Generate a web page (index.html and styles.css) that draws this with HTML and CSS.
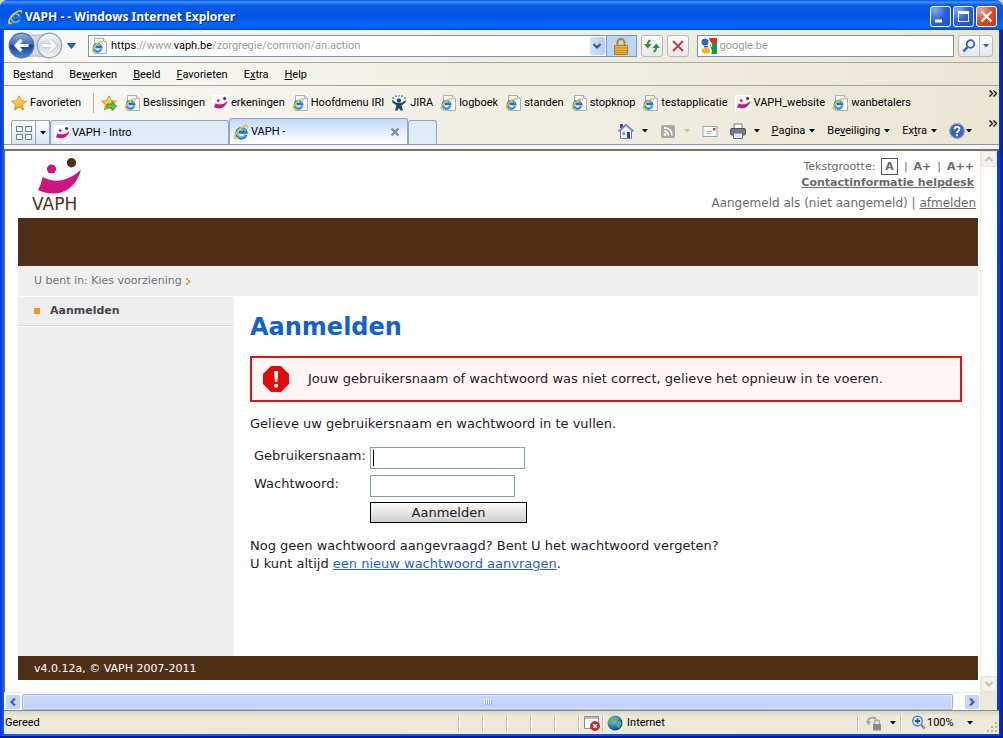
FILE: index.html
```html
<!DOCTYPE html>
<html lang="nl">
<head>
<meta charset="utf-8">
<title>VAPH - - Windows Internet Explorer</title>
<link rel="stylesheet" href="styles.css">
</head>
<body>
<svg class="defs" aria-hidden="true">
  <defs>
    <linearGradient id="blueBtn" x1="0" y1="0" x2="0" y2="1"><stop offset="0" stop-color="#8fb4e6"/><stop offset=".45" stop-color="#3c6fc0"/><stop offset=".5" stop-color="#0f3f96"/><stop offset="1" stop-color="#3f8ce0"/></linearGradient>
    <linearGradient id="greyBtn" x1="0" y1="0" x2="0" y2="1"><stop offset="0" stop-color="#fafbfd"/><stop offset=".5" stop-color="#d3d9e2"/><stop offset="1" stop-color="#f4f6fa"/></linearGradient>
    <linearGradient id="gold" x1="0" y1="0" x2="0" y2="1"><stop offset="0" stop-color="#ffe98a"/><stop offset="1" stop-color="#f0a010"/></linearGradient>
    <radialGradient id="globeFill" cx=".35" cy=".3" r=".8"><stop offset="0" stop-color="#a8dcff"/><stop offset=".5" stop-color="#2f7fd0"/><stop offset="1" stop-color="#0c3c88"/></radialGradient>
    <symbol id="e" viewBox="0 0 16 16">
      <path d="M13 10.600A4.800 4.800 0 1 1 13.100 8.300H5.800" fill="none" stroke="#1d74cc" stroke-width="3"/>
      <path d="M12.600 10.800A4.500 4.500 0 0 1 4.200 8.300A4.600 4.600 0 0 1 12.700 7.400" fill="none" stroke="#6cc4fa" stroke-width="1.300"/>
      <path d="M1.500 14.800C-.6 12 5 4.200 10 2 13.800.2 16 1 14.600 4.600 14.400 2 11.600 2.400 8.800 4.600 4.400 8.200 1.800 12.200 3 13.500 4 14.500 6 13.400 7 12.800 5 15 2.400 16 1.500 14.800z" fill="#f6cf38" stroke="#b8942a" stroke-width=".3"/>
    </symbol>
    <symbol id="page" viewBox="0 0 16 16">
      <path d="M3.500 .5H12.500L15.500 3.500V15.500H3.500z" fill="#fff" stroke="#a9b0bc"/><path d="M12.500.5V3.500H15.500" fill="#e8ecf2" stroke="#a9b0bc"/>
      <svg x="0" y="2.500" width="12.500" height="12.500" viewBox="0 0 16 16"><use href="#e"/></svg>
    </symbol>
    <symbol id="smile" viewBox="0 0 50 37">
      <circle cx="19.500" cy="11" r="4.600" fill="#cf1480"/><circle cx="39.500" cy="4.700" r="4.700" fill="#4f3017"/>
      <path d="M10.500 19Q23 25.500 35 20.500Q43 17.500 49 11.500Q46 24 36.500 31Q23 39.500 6 32Q9.500 26 10.500 19z" fill="#cf1480"/>
    </symbol>
    <symbol id="star" viewBox="0 0 16 16"><path d="M8 .8 10.200 5.600 15.400 6.200 11.500 9.700 12.600 15 8 12.300 3.400 15 4.500 9.700.6 6.200 5.800 5.600z" fill="url(#gold)" stroke="#d08c1c" stroke-width=".9"/></symbol>
    <symbol id="down" viewBox="0 0 6 4"><path d="M0 0H6L3 3.500z" fill="currentColor"/></symbol>
    <symbol id="more" viewBox="0 0 8 7"><path d="M.5.500 3.500 3.500.5 6.500M4.500.500 7.500 3.500 4.500 6.500" fill="none" stroke="#000" stroke-width="1.300"/></symbol>
    <symbol id="chev" viewBox="0 0 10 10"><path d="M1.500 3 5 6.500 8.500 3" fill="none" stroke="currentColor" stroke-width="2.200"/></symbol>
  </defs>
</svg>
<div class="window">
  <header class="titlebar">
    <svg class="i16"><use href="#e"/></svg>
    <span class="title">VAPH - - Windows Internet Explorer</span>
    <button class="winbtn" aria-label="Minimaliseren"><svg viewBox="0 0 19 19"><path d="M4 12.500H11V15.500H4z" fill="#fff"/></svg></button>
    <button class="winbtn" aria-label="Maximaliseren"><svg viewBox="0 0 19 19"><path d="M4.500 5V14.500H14.500V5" fill="none" stroke="#fff"/><path d="M4 4H15V7H4z" fill="#fff"/></svg></button>
    <button class="winbtn close" aria-label="Sluiten"><svg viewBox="0 0 19 19"><path d="M4.500 4.500 14.500 14.500M14.500 4.500 4.500 14.500" stroke="#fff" stroke-width="2.300"/></svg></button>
  </header>
  <div class="chrome">
    <div class="address-row">
      <svg class="nav" viewBox="0 0 55 28" role="img" aria-label="Terug en vooruit">
        <path d="M13 1.500Q27 5 41 1.500V26Q27 22 13 26z" fill="#d5d8de" stroke="#b0b4bc"/>
        <circle cx="13.500" cy="13.500" r="12.200" fill="url(#blueBtn)" stroke="#5c7099" stroke-width="1.400"/>
        <path d="M13.500 8 8 13.500 13.500 19M9 13.500H20.500" fill="none" stroke="#fff" stroke-width="3.200"/>
        <circle cx="41.500" cy="13.500" r="12.200" fill="url(#greyBtn)" stroke="#a0a7b4" stroke-width="1.400"/>
        <path d="M41.500 8 47 13.500 41.500 19M46 13.500H34.500" fill="none" stroke="#b4bac6" stroke-width="4.200"/><path d="M41.500 8 47 13.500 41.500 19M46 13.500H34.500" fill="none" stroke="#fff" stroke-width="2.800"/>
      </svg>
      <svg class="history" viewBox="0 0 9 6"><path d="M.5.500H8.500L4.500 5.500z" fill="#2b74b8" stroke="#123e74" stroke-width=".8"/></svg>
      <div class="address">
        <svg class="i16"><use href="#page"/></svg>
        <span class="url"><b>https</b>://www.<b>vaph.be</b>/zorgregie/common/an.action</span>
        <button class="drop" aria-label="Adressen"><svg viewBox="0 0 10 10"><use href="#chev"/></svg></button>
        <button class="lock" aria-label="Beveiligingsrapport"><svg viewBox="0 0 14 17"><path d="M3.500 8V4.500A3.500 3.500 0 0 1 10.500 4.500V8" fill="none" stroke="#b08424" stroke-width="2"/><path d="M.5 7.500H13.500V16.500H.5z" fill="#eebb38" stroke="#b07c10"/><path d="M1 10H13M1 12.500H13M1 14.500H13" stroke="#c28a18"/></svg></button>
      </div>
      <button class="tool" aria-label="Vernieuwen"><svg viewBox="0 0 16 14"><path d="M6.500 1.500Q3.800 2 3.800 6M9.500 12.500Q12.200 12 12.200 8" fill="none" stroke="#2d9330" stroke-width="2"/><path d="M0 5H7.600L3.800 9.500zM8.400 9H16L12.200 4.500z" fill="#2d9330"/></svg></button>
      <button class="tool" aria-label="Stoppen"><svg viewBox="0 0 16 14"><path d="M3 2 13 12M13 2 3 12" stroke="#c4413c" stroke-width="2"/></svg></button>
      <label class="search">
        <svg viewBox="0 0 16 16"><path d="M0 0H16V16H0z" fill="#fff"/><path d="M8 0H16V5H9z" fill="#e02c20"/><path d="M9 5H16V16H10Q12 12 9 9z" fill="#159a45"/><circle cx="4" cy="4" r="3.500" fill="#2c64c8"/><ellipse cx="5" cy="12.700" rx="4.200" ry="3" fill="#f5b31c"/><path d="M3 8H7V9.500H3z" fill="#2c64c8"/><path d="M8 3Q12 7 9.500 9" stroke="#fff" stroke-width="1.500" fill="none"/></svg>
        <input type="text" placeholder="google.be" aria-label="Zoeken">
      </label>
      <div class="split">
        <button aria-label="Zoeken"><svg viewBox="0 0 14 14"><circle cx="8.500" cy="5" r="3.800" fill="#eaf4ff" stroke="#2a62d0" stroke-width="1.800"/><path d="M5.500 8 1.500 12.500" stroke="#2a62d0" stroke-width="2.600"/></svg></button>
        <button class="half" aria-label="Zoekopties"><svg class="arrow"><use href="#down"/></svg></button>
      </div>
    </div>
    <nav class="menu">
      <span>B<u>e</u>stand</span><span>Be<u>w</u>erken</span><span><u>B</u>eeld</span><span><u>F</u>avorieten</span><span>E<u>x</u>tra</span><span><u>H</u>elp</span>
    </nav>
    <nav class="favs">
      <button class="fav first"><svg class="i16"><use href="#star"/></svg>Favorieten</button>
      <button class="fav add" aria-label="Toevoegen"><svg class="i16"><use href="#star"/><path d="M6 9H11V6.500L15.500 11 11 15.500V13H6z" fill="#5cc83c" stroke="#2a8420" stroke-width=".8"/></svg></button>
      <span class="fav"><svg class="i16"><use href="#page"/></svg>Beslissingen</span>
      <span class="fav"><svg class="i16 paper"><use href="#smile"/></svg>erkeningen</span>
      <span class="fav"><svg class="i16"><use href="#page"/></svg>Hoofdmenu IRI</span>
      <span class="fav"><svg class="i16" viewBox="0 0 16 16"><path d="M1 5 5.500 7.800H10.500L15 5 14.500 7.500 10.500 10.500 12 15.500H9.500L8 13 6.500 15.500H4L5.500 10.500 1.500 7.500z" fill="#17466f"/><circle cx="8" cy="5.500" r="2.100" fill="#17466f"/><g fill="#4482b8"><circle cx="2" cy="3" r=".9"/><circle cx="5" cy="1.200" r=".9"/><circle cx="8" cy=".9" r=".8"/><circle cx="11" cy="1.200" r=".9"/><circle cx="14" cy="3" r=".9"/></g></svg>JIRA</span>
      <span class="fav"><svg class="i16"><use href="#page"/></svg>logboek</span>
      <span class="fav"><svg class="i16"><use href="#page"/></svg>standen</span>
      <span class="fav"><svg class="i16"><use href="#page"/></svg>stopknop</span>
      <span class="fav"><svg class="i16"><use href="#page"/></svg>testapplicatie</span>
      <span class="fav"><svg class="i16 paper"><use href="#smile"/></svg>VAPH_website</span>
      <span class="fav"><svg class="i16"><use href="#page"/></svg>wanbetalers</span>
      <svg class="more"><use href="#more"/></svg>
    </nav>
    <div class="tabrow">
      <div class="quick">
        <button aria-label="Snelle tabbladen"><svg viewBox="0 0 16 14"><path d="M.5.500H6.500V5.500H.5zM9.500.500H15.500V5.500H9.500zM.5 8.500H6.500V13.500H.5zM9.500 8.500H15.500V13.500H9.500z" fill="#f5f8fc" stroke="#6d7b92"/></svg></button>
        <button class="half" aria-label="Tabbladenlijst"><svg class="arrow"><use href="#down"/></svg></button>
      </div>
      <div class="tab"><svg class="i16 paper"><use href="#smile"/></svg>VAPH - Intro</div>
      <div class="tab active"><svg class="i16"><use href="#e"/></svg><span>VAPH -</span><button aria-label="Tabblad sluiten"><svg viewBox="0 0 10 10"><path d="M1.500 1.500 8.500 8.500M8.500 1.500 1.500 8.500" stroke="#85888e" stroke-width="2.200"/></svg></button></div>
      <div class="tab new"></div>
      <div class="commands">
        <svg class="i16" viewBox="0 0 16 16"><path d="M2.500 7.500V15.500H13.500V7.500L8 2.500z" fill="#eef2fb" stroke="#6c7fa8"/><path d="M2 1H5V5H2z" fill="#4343c0"/><path d="M.5 8.500 8 1.500 15.500 8.500" fill="none" stroke="#6c88bc" stroke-width="1.600"/><path d="M9 9H12V15H9z" fill="#274b80"/><path d="M4.500 9H7V12H4.500z" fill="#7a90b4"/></svg>
        <svg class="arrow"><use href="#down"/></svg>
        <svg class="i16" viewBox="0 0 16 16"><rect x="1" y="2" width="14" height="13" rx="2" fill="#a9a9a7"/><circle cx="5" cy="11.500" r="1.500" fill="#fff"/><path d="M4 8Q8 8 8.500 12.500M4 4.800Q11.500 5 12 12.500" fill="none" stroke="#fff" stroke-width="1.400"/></svg>
        <svg class="arrow dim"><use href="#down"/></svg>
        <svg class="i16 mail" viewBox="0 0 16 16"><rect x="1" y="3.500" width="14" height="10" fill="#fff" stroke="#9fa4b2"/><path d="M11 5H13.500V7.500H11z" fill="#d03b30"/><path d="M4 8.500H10M4 10.500H9" stroke="#a9b2c4"/></svg>
        <svg class="i16" viewBox="0 0 16 16"><path d="M4 1H12V6H4z" fill="#fff" stroke="#70757e"/><rect x=".5" y="5.500" width="15" height="6.500" rx="1.500" fill="#777d88" stroke="#4c525c"/><path d="M3.500 10H12.500V15.500H3.500z" fill="#dce9fb" stroke="#5b6f90"/></svg>
        <svg class="arrow"><use href="#down"/></svg>
        <button><span><u>P</u>agina</span><svg class="arrow"><use href="#down"/></svg></button>
        <button><span>Be<u>v</u>eiliging</span><svg class="arrow"><use href="#down"/></svg></button>
        <button><span>Ex<u>t</u>ra</span><svg class="arrow"><use href="#down"/></svg></button>
        <button class="help" aria-label="Help"><svg class="i16" viewBox="0 0 16 16"><circle cx="8" cy="8" r="7.300" fill="#3666b8" stroke="#8a9cbe" stroke-width="1.200"/><path d="M5.500 6.300Q5.500 3.800 8 3.800T10.500 6Q10.500 7.200 9 8.200 8 8.800 8 10" fill="none" stroke="#fff" stroke-width="1.800"/><circle cx="8" cy="12.200" r="1.100" fill="#fff"/></svg><svg class="arrow"><use href="#down"/></svg></button>
      </div>
      <svg class="more"><use href="#more"/></svg>
    </div>
  </div>
  <div class="viewport">
    <div class="site">
      <header class="site-head">
        <div class="logo"><svg viewBox="0 0 50 37"><use href="#smile"/></svg><span>VAPH</span></div>
        <div class="head-links">
          <div class="sizes"><span>Tekstgrootte:</span><b class="current">A</b><span>|</span><b>A+</b><span>|</span><b>A++</b></div>
          <a class="contact" href="#">Contactinformatie helpdesk</a>
          <div class="login">Aangemeld als (niet aangemeld) | <a href="#">afmelden</a></div>
        </div>
      </header>
      <div class="band"></div>
      <div class="crumbs">U bent in: Kies voorziening <svg viewBox="0 0 5 7"><path d="M0 0H2V2H0zM2 2H4V5H2zM0 5H2V7H0z" fill="#f39a1e"/></svg></div>
      <div class="columns">
        <nav class="side"><a href="#">Aanmelden</a></nav>
        <main>
          <h1>Aanmelden</h1>
          <div class="error" role="alert"><svg viewBox="0 0 26 26"><path d="M8 0H18L26 8V18L18 26H8L0 18V8z" fill="#e30a0a"/><path d="M11 5H15.200L14.300 16H11.900z" fill="#fff"/><circle cx="13.100" cy="19.700" r="2" fill="#fff"/></svg>Jouw gebruikersnaam of wachtwoord was niet correct, gelieve het opnieuw in te voeren.</div>
          <p>Gelieve uw gebruikersnaam en wachtwoord in te vullen.</p>
          <form>
            <label for="user">Gebruikersnaam:</label><input id="user" class="user" type="text">
            <label for="pass">Wachtwoord:</label><input id="pass" class="pass" type="password">
            <button type="button">Aanmelden</button>
          </form>
          <p>Nog geen wachtwoord aangevraagd? Bent U het wachtwoord vergeten?<br>U kunt altijd <a href="#">een nieuw wachtwoord aanvragen</a>.</p>
        </main>
      </div>
      <footer class="site-foot">v4.0.12a, © VAPH 2007-2011</footer>
    </div>
    <div class="vscroll"><span class="sbtn up off"><svg viewBox="0 0 10 10"><use href="#chev"/></svg></span><span class="sbtn off"><svg viewBox="0 0 10 10"><use href="#chev"/></svg></span></div>
    <div class="hscroll"><span class="sbtn left"><svg viewBox="0 0 10 10"><use href="#chev"/></svg></span><span class="thumb"><svg viewBox="0 0 8 6"><path d="M.5 0V5M2.500 0V5M4.500 0V5M6.500 0V5" stroke="#eef4fe"/><path d="M1.500 1V6M3.500 1V6M5.500 1V6M7.500 1V6" stroke="#8cb0f8"/></svg></span><span class="sbtn right"><svg viewBox="0 0 10 10"><use href="#chev"/></svg></span></div>
    <div class="corner"></div>
  </div>
  <footer class="status">
    <span class="ready">Gereed</span>
    <i></i><i></i><i></i><i></i><i></i>
    <span class="cell blocked"><svg class="i16" viewBox="0 0 16 16"><path d="M.5 1.500H14.500V13.500H.5z" fill="#fff" stroke="#8e8e8e"/><path d="M1 2H14V4H1z" fill="#b9bcc4"/><circle cx="11" cy="11" r="4.600" fill="#c8282c" stroke="#8e1a1c" stroke-width=".6"/><path d="M9.200 9.200 12.800 12.800M12.800 9.200 9.200 12.800" stroke="#fff" stroke-width="1.500"/></svg></span>
    <span class="cell zone"><svg class="i16" viewBox="0 0 16 16"><circle cx="8" cy="8" r="7.500" fill="url(#globeFill)"/><path d="M3 3.500Q6 1 8 2L8.500 5 6 7.500 5 10 2 7.500zM9 7.500 13 6 14.500 8.500 12 13 10 12zM10.500 2 13.500 4 11 4.500z" fill="#58b848"/></svg>Internet</span>
    <span class="cell safe"><svg class="i16" viewBox="0 0 16 16"><path d="M1.500 8A5 5 0 0 1 10 4" fill="none" stroke="#a4a4a4" stroke-width="1.800"/><path d="M0 6 2.500 10.500 5 6.500z" fill="#a4a4a4"/><path d="M8.500 9.500V7.500A2.500 2.500 0 0 1 13.500 7.500V9.500" fill="none" stroke="#aaa" stroke-width="1.500"/><rect x="7" y="9" width="8" height="6.500" fill="#8c8c8c"/></svg><svg class="arrow"><use href="#down"/></svg></span>
    <span class="cell zoom"><svg class="i16" viewBox="0 0 16 16"><circle cx="6.500" cy="6" r="4.800" fill="#e6f3ff" stroke="#4a8cc8" stroke-width="1.500"/><path d="M6.500 3.300V8.700M3.800 6H9.200" stroke="#1c56a8" stroke-width="1.800"/><path d="M10 9.500 13.500 13.500" stroke="#b98352" stroke-width="2.400"/></svg><span>100%</span><svg class="arrow"><use href="#down"/></svg></span>
    <svg class="grip" viewBox="0 0 12 12"><path d="M9 1H11V3H9zM5 5H7V7H5zM9 5H11V7H9zM1 9H3V11H1zM5 9H7V11H5zM9 9H11V11H9z" fill="#b8b4a0"/></svg>
  </footer>
</div>
</body>
</html>
```
FILE: styles.css
```css
* { box-sizing: border-box; }
body { margin: 0; background: #d9d2c8; font: 11px/14px Roboto, "Noto Sans", sans-serif; color: #000; }
button { margin: 0; padding: 0; border: 0; background: none; font: inherit; color: inherit; }
svg { display: block; flex: none; }
.defs { position: absolute; width: 0; height: 0; }
.i16 { width: 16px; height: 16px; }
.arrow { width: 6px; height: 4px; }
.dim { color: #c4c2b8; }
.paper { background: #fff; }

.window { display: flex; flex-direction: column; height: 100vh; min-height: 480px; padding: 0 4px 4px; border-radius: 8px 8px 0 0; overflow: hidden; background: linear-gradient(90deg, #0831d9, #1660f0 4px, #0a3ed8 calc(100% - 4px), #00138c); box-shadow: inset 0 -2px #001ea0; }

.titlebar { display: flex; align-items: center; gap: 2px; height: 30px; flex: none; margin: 0 -4px; padding: 3px 6px 0 7px; background: linear-gradient(#0a4fdc, #3d95ff 2px, #0a5be8 5px, #0054e3 14px, #0055e8 18px, #0266fd 25px, #0260f0 28px, #0040c8); }
.title { flex: 1; font: bold 12px/16px "Noto Sans", sans-serif; color: #fff; text-shadow: 1px 1px #0a2c80; }
.winbtn { width: 21px; height: 21px; border: 1px solid #fff; border-radius: 3px; background: radial-gradient(circle at 20% 15%, #86a9f4, #2d5fe0 50%, #1c4bd0); }
.close { background: radial-gradient(circle at 20% 15%, #f2a68c, #dc4c28 50%, #c03a10); }

.chrome { flex: none; background: linear-gradient(100deg, #f8f8f6, #f1efe4 50%, #eae6d2); border-bottom: 1px solid #8b93a5; }
.address-row { display: flex; align-items: center; height: 33px; padding: 0 6px 0 4px; border-bottom: 1px solid #aca899; }
.nav { width: 55px; height: 28px; }
.history { width: 9px; height: 6px; margin: 0 12px 0 4px; }
.address { display: flex; align-items: center; flex: 550 1 0; height: 22px; border: 1px solid #7b93b2; background: #fff; padding-left: 2px; }
.url { flex: 1; margin-left: 4px; color: #9b9b9b; white-space: nowrap; }
.url b { font-weight: normal; color: #000; }
.drop { display: grid; place-items: center; width: 15px; height: 18px; background: linear-gradient(90deg, #d6e2fd, #b7cbf9); border-radius: 2px; color: #3a5488; }
.drop svg { width: 10px; height: 10px; }
.lock { display: grid; place-items: center; width: 30px; height: 20px; margin-left: 1px; border-left: 1px solid #6f98cc; background: #bcd6fb; }
.lock svg { width: 14px; height: 17px; }
.tool { display: grid; place-items: center; width: 22px; height: 22px; margin-left: 4px; border: 1px solid #b4b8c0; border-radius: 3px; background: linear-gradient(#fdfdfd, #e6e8ee); }
.tool svg { width: 16px; height: 14px; }
.search { display: flex; align-items: center; flex: 255 1 0; height: 22px; margin-left: 8px; padding-left: 3px; border: 1px solid #7b93b2; background: #fff; }
.search svg { width: 16px; height: 16px; }
.search input { flex: 1; min-width: 0; border: 0; padding: 0 3px; font: inherit; outline: 0; }
.search input::placeholder { color: #9b9b9b; }
.split { display: flex; height: 22px; margin-left: 4px; border: 1px solid #b4b8c0; border-radius: 3px; background: linear-gradient(#fdfdfd, #e3e7f0); }
.split button { display: grid; place-items: center; width: 20px; color: #2a62d0; }
.split button svg:not(.arrow) { width: 14px; height: 14px; }
.split .half { width: 13px; border-left: 1px solid #b4b8c0; }

.menu { display: flex; align-items: center; gap: 16px; height: 23px; padding: 1px 9px 0; border-bottom: 1px solid #aca899; }
.favs { display: flex; align-items: center; height: 32px; padding: 2px 2px 0 7px; gap: 7px; }
.fav { display: flex; align-items: center; gap: 3px; white-space: nowrap; }
.first { height: 20px; padding-right: 12px; border-right: 1px solid #b8b4a4; }
.more { width: 8px; height: 7px; margin-left: auto; align-self: flex-start; margin-top: 2px; }

.tabrow { display: flex; align-items: flex-end; height: 26px; padding: 0 2px 0 7px; }
.quick { display: flex; height: 24px; width: 39px; border: 1px solid #98a3b5; border-bottom: 0; border-radius: 3px 0 0; background: linear-gradient(#fbfcfd, #d9e5f4); }
.quick button { display: grid; place-items: center; width: 23px; }
.quick button svg:not(.arrow) { width: 16px; height: 14px; }
.quick .half { width: 14px; border-left: 1px solid #98a3b5; }
.tab { display: flex; align-items: center; gap: 2px; flex: 0 1 179px; height: 24px; padding: 0 4px 0 3px; border: 1px solid #98a3b5; border-bottom: 0; border-radius: 3px 3px 0 0; background: linear-gradient(#dcebf9, #e2eef9); white-space: nowrap; }
.tab.active { height: 26px; background: linear-gradient(#c0dafc, #eef5fe 70%, #fff); }
.active span { flex: 1; }
.active button { width: 10px; height: 10px; margin-right: 3px; }
.tab.new { flex-basis: 29px; }
.commands { display: flex; align-items: center; margin-left: auto; height: 26px; gap: 8px; }
.commands > .arrow, .commands .mail { margin-right: 4px; }
.commands button { display: flex; align-items: center; gap: 4px; margin-right: 4px; }
.commands .help { gap: 1px; margin-right: 0; }
.tabrow .more { margin: 2px 0 0 17px; }

.viewport { flex: 1; min-height: 0; display: grid; grid-template: minmax(0, 1fr) 18px / minmax(0, 1fr) 17px; padding-right: 2px; border-top: 4px solid #f2f4f8; background: linear-gradient(#fff, #fff) content-box #ece9d8; box-shadow: inset 1px 2px #75726a; }
.site { margin: 2px 2px 0 14px; font: 13px/18px "DejaVu Sans", Verdana, sans-serif; color: #1d1a26; display: flex; flex-direction: column; overflow: hidden; }
.site-head { display: flex; justify-content: space-between; height: 67px; flex: none; padding: 7px 2px 0 14px; color: #6a6a6a; }
.logo { width: 50px; color: #4f3017; }
.logo svg { width: 50px; height: 37px; }
.logo span { display: block; font: 17px/18px "DejaVu Sans", sans-serif; }
.head-links { display: flex; flex-direction: column; align-items: flex-end; }
.head-links a { color: inherit; }
.sizes { display: flex; align-items: center; gap: 6px; margin-right: 2px; font-size: 11px; line-height: 16px; }
.current { padding: 0 3px; border: 1px solid #555; line-height: 15px; }
.contact { margin-right: 2px; font-weight: bold; font-size: 11px; line-height: 16px; }
.login { margin-top: 3px; font-size: 12px; line-height: 18px; }
.band { height: 48px; flex: none; background: #4f3017; }
.crumbs { display: flex; align-items: center; gap: 4px; height: 31px; flex: none; padding-left: 16px; background: #efefef; border-bottom: 1px solid #fff; font-size: 11px; color: #757078; }
.crumbs svg { width: 5px; height: 7px; }
.columns { display: flex; height: 359px; flex: none; }
.side { width: 216px; background: #eee; }
.side a { display: flex; align-items: center; gap: 10px; height: 29px; padding-left: 16px; border-bottom: 1px solid #dadada; box-shadow: 0 1px #fff; color: #4a444c; font-size: 11px; font-weight: bold; text-decoration: none; }
.side a::before { content: ""; width: 6px; height: 6px; background: #f39a1e; }
main { flex: 1; padding: 15px 16px 0; }
h1 { margin: 0 0 14px; font-size: 24px; line-height: 30px; color: #1460cd; }
.error { display: flex; align-items: center; gap: 19px; height: 46px; padding-left: 11px; border: 2px solid #dc1414; background: #fff6f5; }
.error svg { width: 26px; height: 26px; }
p { margin: 13px 0; }
form { display: grid; grid-template-columns: 116px 1fr; row-gap: 6px; padding-left: 4px; margin: 14px 0; }
form input { height: 22px; border: 1px solid #7f9db9; padding: 2px; background: #fff; }
form .user { width: 155px; background: linear-gradient(#000, #000) 2px 2px / 1px 16px no-repeat #fff; }
form .pass { width: 145px; }
form button { grid-column: 2; width: 157px; height: 21px; margin-top: -1px; border: 1px solid #000; background: linear-gradient(#fcfcfc, #cfcfcf); }
main a { color: #2a60c0; }
.site-foot { height: 24px; flex: none; padding-left: 16px; background: #4f3017; color: #fff; font-size: 11px; line-height: 26px; }

.vscroll { display: flex; flex-direction: column; justify-content: space-between; margin-top: 2px; border-left: 1px solid #eeede5; background: #fdfdfa; }
.sbtn { display: grid; place-items: center; width: 16px; height: 16px; border: 1px solid #fff; border-radius: 2px; background: #c5d6fc; color: #4d6185; }
.sbtn svg { width: 10px; height: 10px; }
.off { background: #f4f2ea; border-color: #e6e4d8; color: #c4c2b4; }
.up svg { transform: rotate(180deg); }
.left svg { transform: rotate(90deg); }
.right svg { transform: rotate(-90deg); }
.hscroll { display: flex; align-items: center; justify-content: space-between; padding-left: 1px; border-top: 1px solid #eeede5; background: #fbfbf8; }
.thumb { display: grid; place-items: center; flex: 1; height: 16px; margin: 0 11px 0 1px; border: 1px solid #9ab2ee; border-radius: 2px; background: linear-gradient(#cbdafe, #bfd2fd); box-shadow: inset 0 0 0 1px #dfe8ff; }
.thumb svg { width: 8px; height: 6px; }
.corner { background: #ece9d8; }

.status { display: flex; align-items: center; height: 24px; flex: none; padding: 1px 0 0 1px; border-top: 1px solid #8d8a7e; background: linear-gradient(#d8d5c6, #ece9d8 5px, #ece9d8); }
.ready { flex: 455 1 0; }
.status i { width: 24px; height: 16px; border-left: 1px solid #c4c1b0; box-shadow: inset 1px 0 #fff; }
.cell { display: flex; align-items: center; height: 16px; border-left: 1px solid #c4c1b0; box-shadow: inset 1px 0 #fff; }
.blocked { width: 24px; padding-left: 5px; }
.zone { flex: 251 1 0; gap: 4px; padding-left: 4px; }
.safe { width: 43px; gap: 8px; padding-left: 8px; }
.zoom { width: 76px; gap: 0; padding-left: 10px; }
.zoom span { flex: 1; }
.zoom .arrow { margin-right: 3px; }
.grip { width: 12px; height: 12px; align-self: flex-end; margin: 0 1px 1px 10px; }
```
